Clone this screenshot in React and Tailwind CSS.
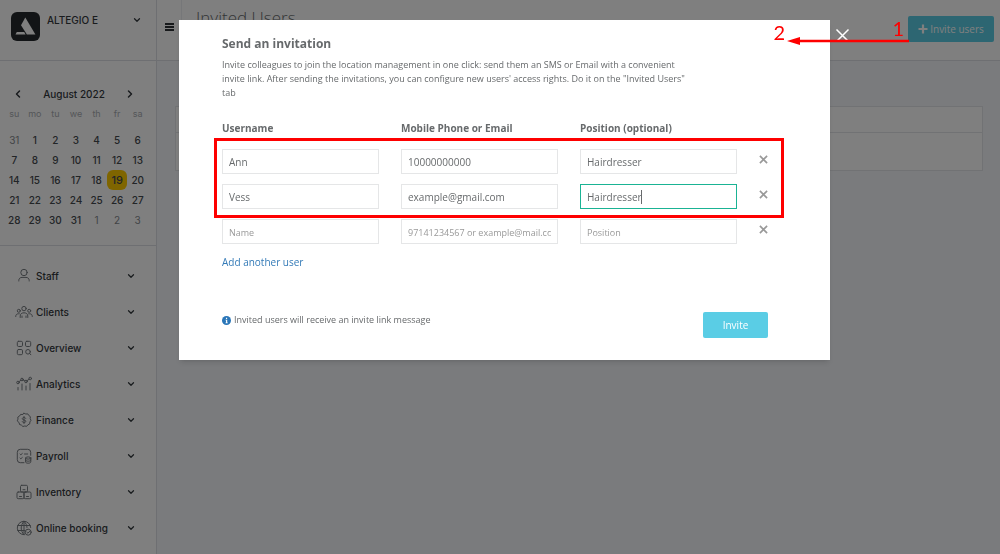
import { useState } from 'react'
import { ChevronDown, ChevronLeft, ChevronRight } from 'lucide-react'

const weekdays = ['su', 'mo', 'tu', 'we', 'th', 'fr', 'sa']

const days = [
    31, ...Array.from({ length: 31 }, (_, i) => i + 1), 1, 2, 3,
]

const navItems = [
    {
        label: 'Staff',
        icon: (
            <>
                <circle cx="8" cy="4.500" r="3.200" />
                <path d="M2.800 13v-.6c0-1.900 1.400-3 3.200-3h4c1.800 0 3.200 1.100 3.200 3v.6" />
            </>
        ),
    },
    {
        label: 'Clients',
        icon: (
            <>
                <circle cx="8" cy="4.600" r="2.200" />
                <circle cx="2.800" cy="6.800" r="1.500" />
                <circle cx="13.200" cy="6.800" r="1.500" />
                <path d="M4.200 13.500v-1.500c0-2 1.500-3.200 3.800-3.200s3.800 1.200 3.800 3.200v1.500M-.3 12.500c0-1.800 1-2.700 2.600-2.700h1M16.300 12.500c0-1.800-1-2.700-2.600-2.700h-1M6 13.500v-1.500M10 13.500v-1.500" />
            </>
        ),
    },
    {
        label: 'Overview',
        icon: (
            <>
                <rect x="1.300" y="1.300" width="5.200" height="5.200" rx="1.300" />
                <rect x="9.500" y="1.300" width="5.200" height="5.200" rx="1.300" />
                <rect x="1.300" y="9.500" width="5.200" height="5.200" rx="1.300" />
                <circle cx="12" cy="11.800" r="2.300" />
                <path d="M13.600 13.400l1.300 1.400" />
            </>
        ),
    },
    {
        label: 'Analytics',
        icon: (
            <>
                <circle cx="2" cy="6.500" r="1.300" />
                <circle cx="6" cy="3.500" r="1.300" />
                <circle cx="10" cy="5.500" r="1.300" />
                <circle cx="14.200" cy="2.500" r="1.300" />
                <path d="M3 5.700l2-1.500M7.200 4l1.700.9M11 4.700l2.200-1.500M2 11.500v2.500M6 8v6M10 10v4M14 7.500v6.500" />
            </>
        ),
    },
    {
        label: 'Finance',
        icon: (
            <>
                <path d="M8 1.200l1.800.8 2-.1 1 1.600 1.600 1.200-.2 2 .8 1.600-1.100 1.600-.2 2-1.800.9-1.200 1.500-1.900-.3-1.900.5-1.500-1.400-1.900-.6-.4-1.900L1.200 8.900 2 7.100 1.800 5.100l1.700-1L4.600 2.400l1.900.1z" />
                <path d="M9.700 6.300c-.3-.6-.9-.8-1.700-.8-1 0-1.700.4-1.700 1.200 0 1.800 3.500.8 3.500 2.600 0 .8-.8 1.200-1.800 1.200-.9 0-1.500-.3-1.800-.9M8 4.500v7" />
            </>
        ),
    },
    {
        label: 'Payroll',
        icon: (
            <>
                <path d="M8 14.700H4.300a3 3 0 0 1-3-3V4.300a3 3 0 0 1 3-3h7.400a3 3 0 0 1 3 3v3M4 6l.8.8L6.300 5.500M8.500 6h3.200M4 10l.8.8 1.500-1.300" />
                <ellipse cx="12.200" cy="10" rx="2.600" ry="1.100" />
                <path d="M9.600 10v4c0 .7 1.100 1.200 2.600 1.200s2.600-.5 2.600-1.200v-4M9.600 12c0 .7 1.100 1.200 2.600 1.200s2.600-.5 2.600-1.200" />
            </>
        ),
    },
    {
        label: 'Inventory',
        icon: (
            <>
                <rect x="4.500" y="1.300" width="7" height="6.700" rx="1.200" />
                <rect x="1" y="8" width="7" height="6.700" rx="1.200" />
                <rect x="8" y="8" width="7" height="6.700" rx="1.200" />
                <path d="M7 5.700h2M3.500 12.500h2M10.500 12.500h2" />
            </>
        ),
    },
    {
        label: 'Online booking',
        icon: (
            <>
                <path d="M8 14.700A6.700 6.700 0 1 1 14.700 7.500M8 1.300C4.200 5 4.200 11 8 14.700M8 1.300c2 1.900 3 4 3 6.200M1.800 5.500h12.400M1.800 10.500h6.700M8 1.300v13.400" />
                <circle cx="12.200" cy="12.200" r="3" />
                <path d="M10.900 12.200l1 1 1.700-1.800" />
            </>
        ),
    },
]

const initialUsers = [
    { name: 'Ann', contact: '10000000000', position: 'Hairdresser' },
    { name: 'Vess', contact: 'example@gmail.com', position: 'Hairdresser', active: true },
    { name: '', contact: '', position: '' },
]

const columns = [
    { key: 'name', label: 'Username', placeholder: 'Name' },
    { key: 'contact', label: 'Mobile Phone or Email', placeholder: '97141234567 or example@mail.com' },
    { key: 'position', label: 'Position (optional)', placeholder: 'Position' },
]

function Cross({ className }) {
    return (
        <svg viewBox="0 0 10 10" className={className} fill="none" stroke="currentColor">
            <path d="M1 1l8 8M9 1l-8 8" />
        </svg>
    )
}

function Calendar() {
    return (
        <div className="h-[185px] border-b border-[#dcdfe5] pt-[23px] pl-1 pr-2">
            <div className="flex h-5 items-center justify-between pl-2 pr-3 text-[#33383d]">
                <button aria-label="Previous month"><ChevronLeft size={12} strokeWidth={3} /></button>
                <span className="text-[10px] font-medium">August 2022</span>
                <button aria-label="Next month"><ChevronRight size={12} strokeWidth={3} /></button>
            </div>
            <div className="mb-1.5 grid h-5 grid-cols-7 items-center text-center text-[9px] text-[#a9adb2]">
                {weekdays.map((day) => <span key={day}>{day}</span>)}
            </div>
            <div className="grid grid-cols-7 text-center text-[10px] font-medium leading-5 text-[#454a4f]">
                {days.map((day, i) => (
                    <button
                        key={i}
                        className={
                            i === 19
                                ? 'rounded-md bg-[#ffcb00] text-[11px]'
                                : i === 0 || i > 31 ? 'font-normal text-[#85898e]' : ''
                        }
                    >
                        {day}
                    </button>
                ))}
            </div>
        </div>
    )
}

function Sidebar() {
    return (
        <aside className="w-[157px] shrink-0 border-r border-[#dcdfe5] bg-white font-['Inter',sans-serif]">
            {/* Account */}
            <div className="flex h-[61px] border-b border-[#dcdfe5] pt-3 pl-[11px] pr-3.5">
                <svg viewBox="0 0 29 29" className="size-[29px]">
                    <rect width="29" height="29" rx="6" fill="#25292c" />
                    <path d="M14.300 5.500L10 13.200l5.900 9.300h8.500z" fill="#fff" />
                    <path d="M5.800 20h7.400l1.400 2.500H4.500z" fill="#fff" />
                </svg>
                <button className="ml-[7px] flex h-4 flex-1 items-center justify-between text-[10px] font-medium text-[#33383d]">
                    ALTEGIO E
                    <ChevronDown size={10} strokeWidth={3} />
                </button>
            </div>
            <Calendar />
            {/* Navigation */}
            <nav className="pt-3">
                {navItems.map((item) => (
                    <button key={item.label} className="flex h-9 w-full items-center pl-4 pr-5 text-[10px] font-medium text-[#33383d]">
                        <svg viewBox="0 0 16 16" className="mr-1 size-4 overflow-visible text-[#777c81]" fill="none" stroke="currentColor" strokeLinecap="round" strokeLinejoin="round">
                            {item.icon}
                        </svg>
                        {item.label}
                        <ChevronDown size={10} strokeWidth={3} className="ml-auto" />
                    </button>
                ))}
            </nav>
        </aside>
    )
}

function InviteModal() {
    const [users, setUsers] = useState(initialUsers)

    const updateUser = (index, key, value) => {
        setUsers(users.map((user, i) => (i === index ? { ...user, [key]: value } : user)))
    }

    return (
        <div role="dialog" aria-labelledby="invite-title" className="relative w-full max-w-[651px] bg-white px-[43px] pt-4 pb-[22px] text-[#676a6c] shadow-md">
            <h2 id="invite-title" className="text-[12px] font-bold leading-4">Send an invitation</h2>
            <p className="mt-1.5 max-w-[465px] text-[9px] leading-[14px]">
                Invite colleagues to join the location management in one click: send them an SMS or Email with a convenient invite link. After sending the invitations, you can configure new users' access rights. Do it on the "Invited Users" tab
            </p>

            <div className="mt-5 grid grid-cols-[1fr_1fr_1fr_28px] gap-x-[22px] text-[10px] font-bold leading-4">
                {columns.map((column) => <span key={column.key} id={column.key}>{column.label}</span>)}
            </div>

            {/* User rows */}
            <div className="relative mt-[13px] space-y-2.5">
                {users.map((user, index) => (
                    <div key={index} className="grid grid-cols-[1fr_1fr_1fr_28px] gap-x-[22px]">
                        {columns.map((column) => {
                            const active = user.active && column.key === 'position'
                            return (
                                <div key={column.key} className="relative">
                                    <input
                                        aria-labelledby={column.key}
                                        value={user[column.key]}
                                        placeholder={column.placeholder}
                                        onChange={(e) => updateUser(index, column.key, e.target.value)}
                                        className={`block h-[25px] w-full border px-1.5 text-[10px] outline-none placeholder:text-[9px] placeholder:text-[#999] ${active ? 'border-[#1ab394]' : 'border-[#e5e6e7]'}`}
                                    />
                                    {active && <span className="absolute left-[61px] top-1.5 h-3.5 w-px bg-[#676a6c]" />}
                                </div>
                            )
                        })}
                        <button
                            aria-label="Remove user"
                            onClick={() => setUsers(users.filter((_, i) => i !== index))}
                            className="mb-1 justify-self-start text-[#999]"
                        >
                            <Cross className="size-[9px] stroke-[1.800]" />
                        </button>
                    </div>
                ))}
                {/* Highlight around the filled rows */}
                <div className="pointer-events-none absolute -left-2 -top-[11px] h-20 w-[570px] border-[3px] border-[#fe0000]" />
            </div>

            <button
                onClick={() => setUsers([...users, { name: '', contact: '', position: '' }])}
                className="mt-2.5 block text-[10px] leading-4 text-[#337ab7]"
            >
                Add another user
            </button>

            <div className="mt-[42px] flex justify-between pr-[19px]">
                <p className="flex h-4 items-center gap-[3px] text-[9px]">
                    <svg viewBox="0 0 10 10" className="size-[9px]">
                        <circle cx="5" cy="5" r="5" fill="#2a76b8" />
                        <path d="M4 4.300h1.800v3h.6v.8H3.900v-.8h.6V5.100H4zM4.400 2h1.300v1.300H4.400z" fill="#fff" />
                    </svg>
                    Invited users will receive an invite link message
                </p>
                <button className="h-[26px] w-[65px] rounded-xs bg-[#5acde5] text-[10px] text-white">Invite</button>
            </div>

            <button aria-label="Close" className="absolute -right-5 top-2 text-white">
                <Cross className="size-[15px]" />
            </button>

            {/* Step markers */}
            <svg viewBox="0 0 122 10" className="absolute -right-[79px] top-4 h-2.5 w-[122px]">
                <path d="M10 5h112" stroke="#fe0000" strokeWidth="2.600" />
                <path d="M0 5l13-4v8z" fill="#fe0000" />
            </svg>
            <span className="absolute right-[45px] top-0 font-['Lato',sans-serif] text-[20px] leading-6 text-[#fe0000]">2</span>
            <span className="absolute -right-[74px] -top-1 font-['Lato',sans-serif] text-[20px] leading-6 text-[#fe0000]">1</span>
        </div>
    )
}

export default function App() {
    return (
        <div className="flex min-h-screen bg-[#f4f6fa] font-['Open_Sans',sans-serif]">
            <Sidebar />
            <main className="min-w-0 flex-1">
                <header className="flex h-[61px] border-b border-[#dcdfe5] bg-white">
                    <button aria-label="Toggle menu" className="flex w-[25px] shrink-0 flex-col items-center gap-px border-r border-[#eceef2] pt-[23px]">
                        <span className="h-0.5 w-[9px] bg-[#2f3336]" />
                        <span className="h-0.5 w-[9px] bg-[#2f3336]" />
                        <span className="h-0.5 w-[9px] bg-[#2f3336]" />
                    </button>
                    <h1 className="mt-1.5 ml-3.5 text-[17px] font-light leading-6 text-[#676a6c]">Invited Users</h1>
                    <button className="mt-4 mr-1.5 ml-auto flex h-[26px] w-[86px] items-center justify-center gap-0.5 rounded-xs bg-[#5acde5] text-[10px] text-white">
                        <svg viewBox="0 0 10 10" className="size-2.5" stroke="currentColor" strokeWidth="2.200">
                            <path d="M5 .5v9M.5 5h9" />
                        </svg>
                        Invite users
                    </button>
                </header>
                <div className="mt-[45px] mr-[17px] ml-[18px] border border-[#e2e4e8] bg-white">
                    <div className="h-[26px] border-b border-[#e2e4e8]" />
                    <div className="h-[37px]" />
                </div>
            </main>

            <div className="fixed inset-0 flex items-start justify-center bg-black/50 pt-5 pl-[9px]">
                <InviteModal />
            </div>
        </div>
    )
}
